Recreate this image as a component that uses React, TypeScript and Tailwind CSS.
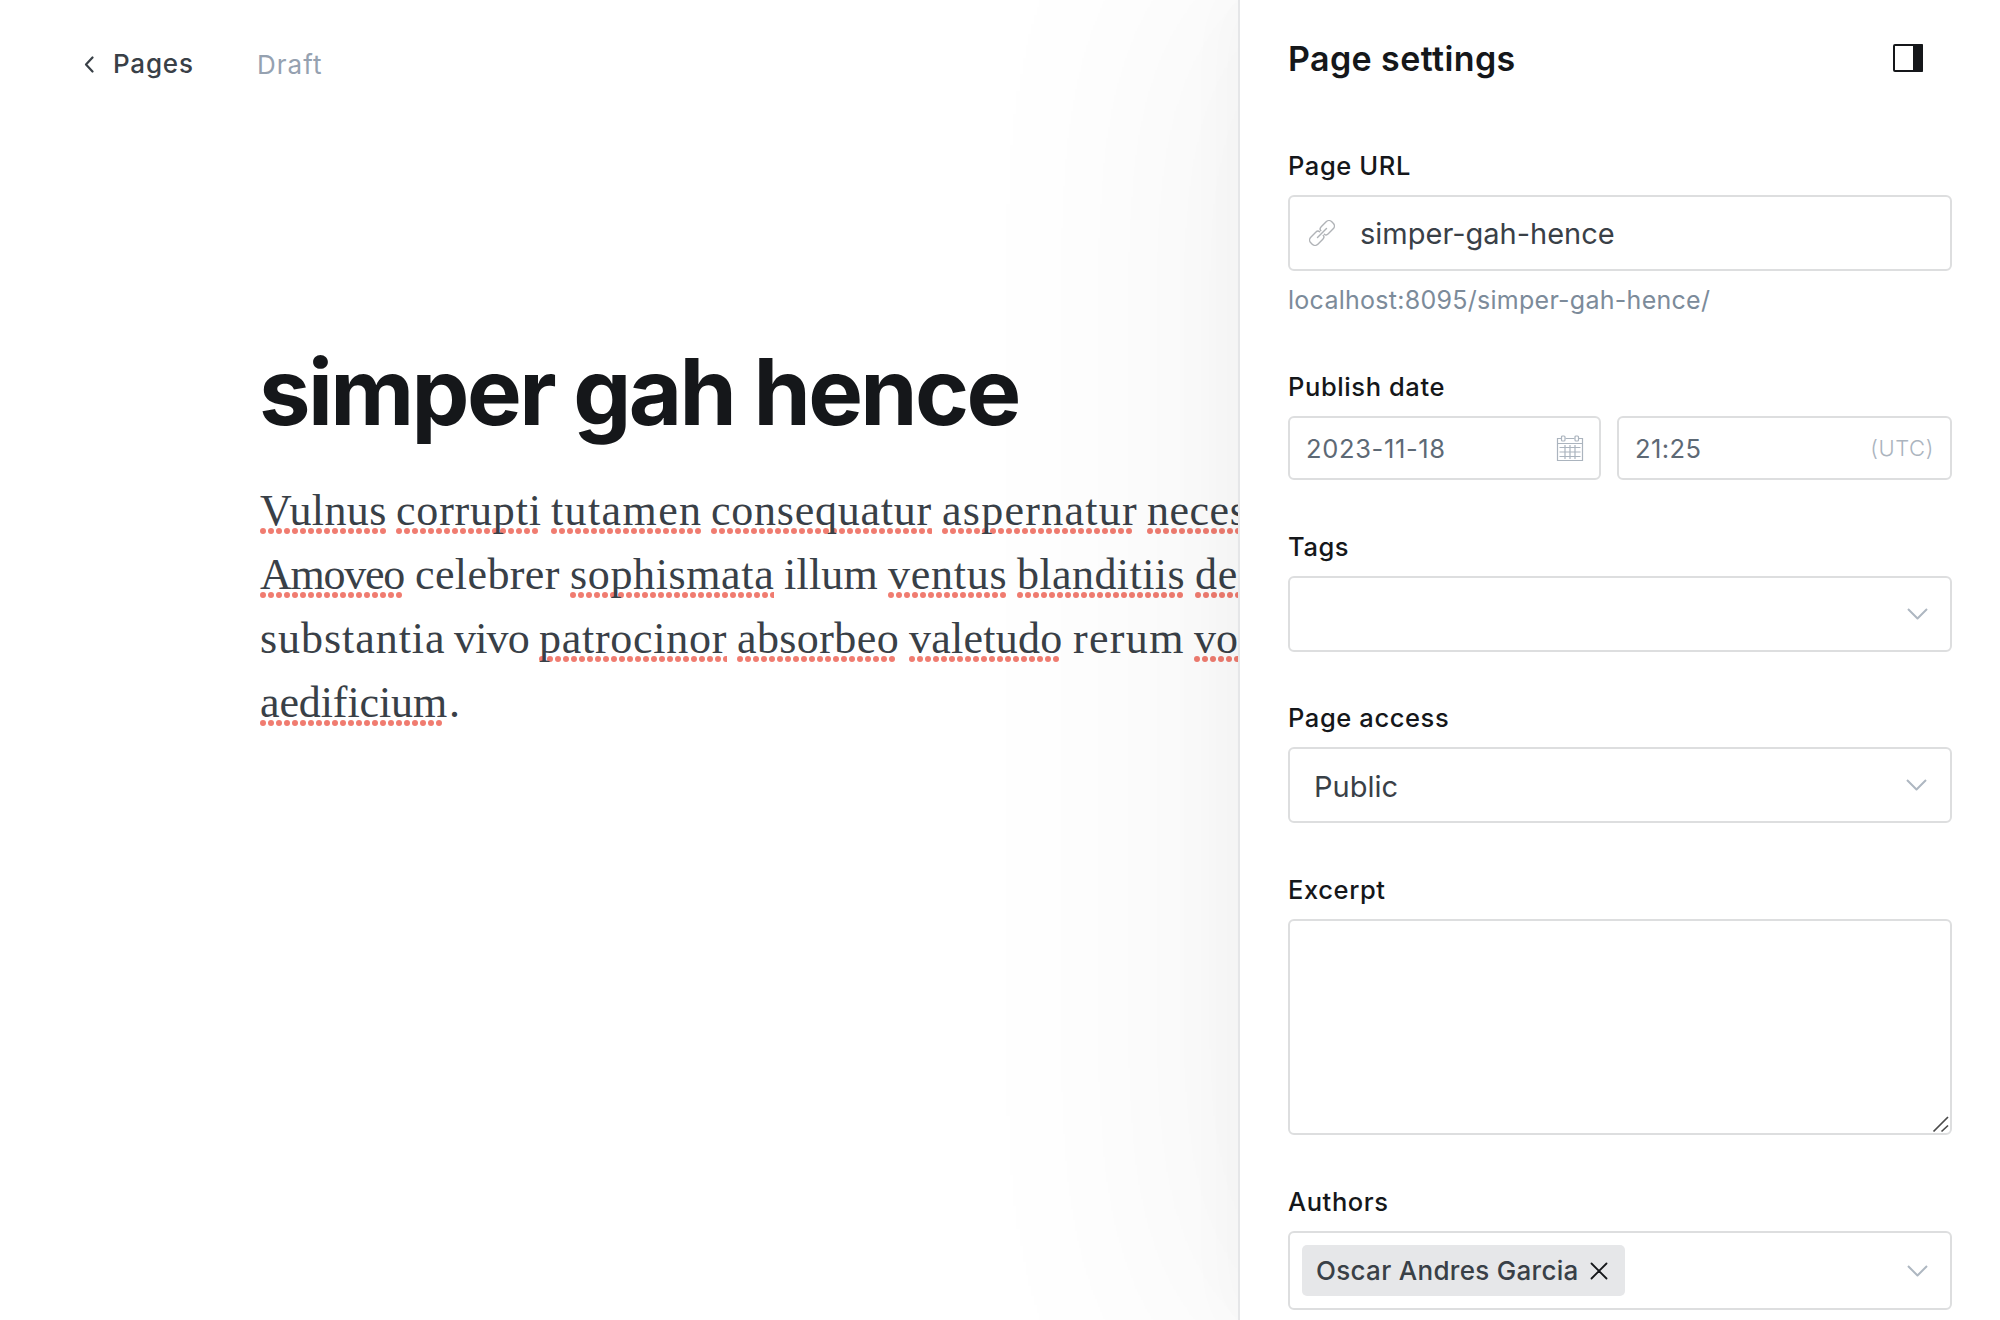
import React from "react";

const Squiggle = ({ w }: { w: number }) => (
  <svg className="absolute left-0 top-[50px] h-[6px]" style={{ width: w }} aria-hidden="true">
    <line x1="3" y1="3" x2={w} y2="3" stroke="#f07c70" strokeWidth="6" strokeLinecap="round" strokeDasharray="0 8" />
  </svg>
);

// text, start x, end x, flagged by the spell checker
type Word = [string, number, number, boolean];

const lines: Word[][] = [
  [["Vulnus", 260, 386, true], ["corrupti", 396, 541, true], ["tutamen", 551, 702, true], ["consequatur", 711, 932, true], ["aspernatur", 942, 1137, true], ["necessitatibus", 1147, 1398, true]],
  [["Amoveo", 260, 405, true], ["celebrer", 415, 560, false], ["sophismata", 570, 774, true], ["illum", 784, 878, false], ["ventus", 888, 1007, true], ["blanditiis", 1017, 1185, true], ["defetiscor", 1195, 1376, true]],
  [["substantia", 260, 445, false], ["vivo", 454, 529, false], ["patrocinor", 539, 727, true], ["absorbeo", 737, 899, true], ["valetudo", 909, 1063, true], ["rerum", 1073, 1184, false], ["voluptatum", 1194, 1394, true]],
  [["aedificium", 260, 447, true], [".", 449, 461, false]],
];

function EditorWord({ word }: { word: Word }) {
  const [text, x0, x1, flagged] = word;
  const ref = React.useRef<HTMLSpanElement>(null);
  const [spacing, setSpacing] = React.useState(0);
  React.useLayoutEffect(() => {
    const el = ref.current;
    if (el && text.length > 1) setSpacing((x1 - x0 - el.offsetWidth) / (text.length - 0.5));
  }, []);
  return (
    <span className="relative block shrink-0" style={{ width: x1 - x0 }}>
      {flagged && <Squiggle w={x1 - x0} />}
      <span ref={ref} className="relative mt-[1px] inline-block whitespace-pre" style={{ letterSpacing: spacing }}>{text}</span>
    </span>
  );
}

const Chevron = () => (
  <svg className="mr-[22px] h-[14px] w-[21px]" viewBox="0 0 21 14" fill="none" stroke="#aeb7c1" strokeWidth="2" strokeLinejoin="round">
    <path d="M1 2 10.500 11.500 20 2" />
  </svg>
);

const Label = ({ children }: { children: React.ReactNode }) => (
  <div className="h-[46px] text-[25.5px] font-medium leading-[34px] tracking-[0.6px] text-[#15171a]">{children}</div>
);

const box = "flex items-center rounded-[6px] border-2 border-[#dddedf] bg-white";

export default function App() {
  return (
    <div className="flex h-[1320px] w-[2000px] overflow-hidden bg-white font-['Inter',sans-serif]">
      <main className="h-full w-[1238px] shrink-0 overflow-hidden">
        <header className="flex h-[128px] items-center pl-[84px]">
          <svg className="h-[18px] w-[11px]" viewBox="0 0 11 18" fill="none" stroke="#394047" strokeWidth="2.2" strokeLinecap="round" strokeLinejoin="round">
            <path d="M8.500 2.500 2 9.500l6.500 7" />
          </svg>
          <span className="mb-[1px] ml-[18px] w-[144px] text-[26px] font-medium tracking-[0.8px] text-[#394047]">Pages</span>
          <span className="text-[26px] tracking-[1px] text-[#95a1b0]">Draft</span>
        </header>
        <h1 className="mt-[206px] pl-[259px] text-[92px] font-bold leading-[116px] tracking-[-2.6px] text-[#15171a]">simper gah hence</h1>
        <div className="mt-[28px] pl-[260px] font-['Liberation_Serif',serif] text-[44px] leading-[64px] text-[#394047]">
          {lines.map((line, i) => (
            <div key={i} className="flex h-[64px]">
              {line.map((word, j) => (
                <React.Fragment key={word[0]}>
                  {j > 0 && <span className="shrink-0" style={{ width: word[1] - line[j - 1][2] }} />}
                  <EditorWord word={word} />
                </React.Fragment>
              ))}
            </div>
          ))}
        </div>
      </main>

      <aside className="relative h-full w-[762px] shrink-0 border-l-2 border-[#e5e6e8] bg-white pl-[48px] shadow-[0_0_60px_rgba(0,0,0,0.03),0_0_300px_40px_rgba(0,0,0,0.05)]">
        <div className="flex h-[116px] items-center justify-between pr-[76px]">
          <h2 className="text-[34px] font-semibold tracking-[0.4px] text-[#15171a]">Page settings</h2>
          <svg className="h-[30px] w-[32px]" viewBox="0 0 32 30">
            <rect x="2" y="2" width="28" height="26" rx="1" fill="none" stroke="#15171a" strokeWidth="2" />
            <path d="M21 1h9q1 0 1 1v26q0 1-1 1h-9z" fill="#15171a" />
          </svg>
        </div>

        <div className="w-[664px] pt-[33px]">
          <Label>Page URL</Label>
          <div className={box + " h-[76px]"}>
            <svg className="ml-[19px] h-[26px] w-[26px]" viewBox="0 0 26 26" fill="none" stroke="#b0b3b7" strokeWidth="1.4" strokeLinecap="round" strokeLinejoin="round">
              <path d="M8.500 17.500l9-9" />
              <path transform="translate(18.200 7.800) rotate(-45)" d="M-6.500-2.500Q-6.500-5-3.500-5H3.500a4 4 0 0 1 4 4V1a4 4 0 0 1-4 4H-3.500Q-6.500 5-6.500 2.500" />
              <path transform="translate(7.800 18.200) rotate(135)" d="M-6.500-2.500Q-6.500-5-3.500-5H3.500a4 4 0 0 1 4 4V1a4 4 0 0 1-4 4H-3.500Q-6.500 5-6.500 2.500" />
            </svg>
            <span className="ml-[25px] mt-[1px] text-[29px] text-[#394047]">simper-gah-hence</span>
          </div>
          <p className="mt-[11px] h-[37px] text-[25px] leading-[36px] tracking-[0.27px] text-[#7c8b9a]">localhost:8095/simper-gah-hence/</p>

          <div className="mt-[51px]"><Label>Publish date</Label></div>
          <div className="flex gap-[16px]">
            <div className={box + " h-[64px] w-[313px] justify-between pl-[16px] pr-[15px]"}>
              <span className="mt-[2px] text-[25.5px] tracking-[0.65px] text-[#5d6975]">2023-11-18</span>
              <svg className="h-[28px] w-[28px]" viewBox="0 0 28 28" fill="none" stroke="#abb4be" strokeWidth="1.2">
                <path d="M5 4.500H1.500v22h25v-22H23M9.500 4.500h9M1.500 9.500h25" />
                <rect x="5.500" y="2" width="3.500" height="5" rx="1" />
                <rect x="19" y="2" width="3.500" height="5" rx="1" />
                <path d="M3.500 13.500h21M3.500 18h21M3.500 22.500h21M9 11v14M14 11v14M19 11v14" />
              </svg>
            </div>
            <div className={box + " h-[64px] w-[335px] justify-between pl-[16px] pr-[16px]"}>
              <span className="mt-[2px] text-[25.5px] tracking-[0.4px] text-[#5d6975]">21:25</span>
              <span className="text-[22px] font-light tracking-[0.6px] text-[#abb4be]">(UTC)</span>
            </div>
          </div>

          <div className="mt-[50px]"><Label>Tags</Label></div>
          <div className={box + " h-[76px] justify-end"}><Chevron /></div>

          <div className="mt-[49px]"><Label>Page access</Label></div>
          <div className={box + " h-[76px] justify-between pl-[24px] pr-[1px]"}>
            <span className="mt-[3px] text-[29px] text-[#394047]">Public</span><Chevron />
          </div>

          <div className="mt-[50px]"><Label>Excerpt</Label></div>
          <div className={box + " h-[216px] items-end! justify-end"}>
            <svg className="h-[22px] w-[22px]" viewBox="0 0 22 22" stroke="#4a4a4a" strokeWidth="1.700"><path d="M5.500 20.500 20 6M13.500 20.500l6.500-6" /></svg>
          </div>

          <div className="mt-[50px]"><Label>Authors</Label></div>
          <div className={box + " h-[79px] justify-between pl-[12px]"}>
            <div className="flex h-[51px] w-[323px] items-center rounded-[5px] bg-[#e6e7e9] pl-[14px]">
              <span className="text-[26px] font-medium tracking-[0.3px] text-[#394047]">Oscar Andres Garcia</span>
              <svg className="ml-auto mr-[17px] h-[18px] w-[18px]" viewBox="0 0 18 18" stroke="#15171a" strokeWidth="1.800" strokeLinecap="round"><path d="m1.500 1.500 15 15M16.500 1.500l-15 15" /></svg>
            </div>
            <Chevron />
          </div>
        </div>
      </aside>
    </div>
  );
}
